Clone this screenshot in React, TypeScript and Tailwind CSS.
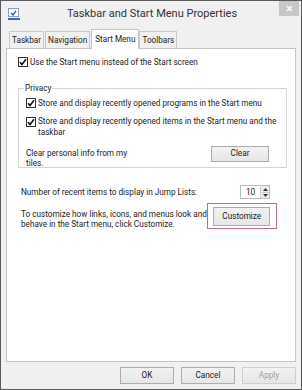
import React from "react";

function Check({ checked = true }: { checked?: boolean }) {
  return (
    <span className="inline-flex h-[10px] w-[10px] shrink-0 items-center justify-center border border-[#333] bg-white">
      {checked && (
        <svg width="8" height="8" viewBox="0 0 8 8">
          <path d="M1 4.2 L3 6.4 L7 1.2" fill="none" stroke="#111" strokeWidth="1.6" />
        </svg>
      )}
    </span>
  );
}

function Btn({ label, disabled = false, className = "" }: { label: string; disabled?: boolean; className?: string }) {
  return (
    <div
      className={
        "flex items-center justify-center border bg-gradient-to-b from-[#f2f2f2] to-[#e6e6e6] " +
        (disabled ? "border-[#cfcfcf] text-[#a0a0a0]" : "border-[#adadad] text-[#222]") +
        " " +
        className
      }
    >
      {label}
    </div>
  );
}

export default function App() {
  const tabs = ["Taskbar", "Navigation", "Start Menu", "Toolbars"];

  return (
    <div
      className="flex h-[390px] w-[302px] flex-col whitespace-nowrap border border-[#5a5a5a] bg-[#f0f0f0] text-[8.2px] text-[#222]"
      style={{ fontFamily: 'Roboto, "Noto Sans", Arial, sans-serif' }}
    >
      {/* title bar */}
      <div className="flex h-[27px] shrink-0 items-start">
        <div className="ml-[7px] mt-[7px] flex h-[12px] w-[13px] flex-col">
          <div className="flex h-[9px] w-[11px] items-center justify-center border border-[#8aa0b8] bg-white">
            <svg width="7" height="6" viewBox="0 0 7 6">
              <path d="M1 3 L3 5 L6 1" fill="none" stroke="#2a5fa8" strokeWidth="1.3" />
            </svg>
          </div>
          <div className="mt-[1px] h-[2px] w-[12px] bg-[#3a6ab0]" />
        </div>
        <div className="flex-1 pt-[5px] pl-[4px] text-center text-[11px] text-[#333]">
          Taskbar and Start Menu Properties
        </div>
        <div className="mr-[2px] flex h-[15px] w-[20px] items-center justify-center bg-[#c7c7c7]">
          <svg width="7" height="7" viewBox="0 0 7 7">
            <path d="M1 1 L6 6 M6 1 L1 6" stroke="#fff" strokeWidth="1.4" />
          </svg>
        </div>
      </div>

      {/* tabs */}
      <div className="relative z-10 flex h-[20px] shrink-0 items-end pl-[8px]">
        {tabs.map((t) => {
          const sel = t === "Start Menu";
          return (
            <div
              key={t}
              className={
                sel
                  ? "-mb-[1px] flex h-[20px] items-start border border-b-0 border-[#c4c4c4] bg-white px-[3px] pt-[3px]"
                  : "mr-[1px] flex h-[17px] items-start border border-b-0 border-[#c9c9c9] bg-[#f0f0f0] px-[2px] pt-[2px]"
              }
            >
              {t}
            </div>
          );
        })}
      </div>

      {/* panel */}
      <div className="mx-[5px] flex flex-1 flex-col border border-[#c4c4c4] bg-white">
        <div className="mt-[7px] ml-[11px] flex items-center gap-[2px]">
          <Check />
          <span>Use the Start menu instead of the Start screen</span>
        </div>

        <div className="relative ml-[11px] mr-[8px] mt-[20px] h-[80px] border border-[#d6d6d6] px-[7px]">
          <span className="absolute -top-[7px] left-[5px] bg-white px-[1px]">Privacy</span>
          <div className="mt-[8px] flex items-center gap-[2px]">
            <Check />
            <span>Store and display recently opened programs in the Start menu</span>
          </div>
          <div className="mt-[6px] flex items-start gap-[2px]">
            <span className="mt-[1px]">
              <Check />
            </span>
            <span className="leading-[11px]">
              Store and display recently opened items in the Start menu and the
              <br />
              taskbar
            </span>
          </div>
          <div className="mt-[10px] flex items-start justify-between">
            <span className="leading-[10px]">
              Clear personal info from my
              <br />
              tiles.
            </span>
            <Btn label="Clear" className="mr-[10px] mt-[-2px] h-[16px] w-[58px]" />
          </div>
        </div>

        <div className="mx-[14px] mt-[17px] flex items-center justify-between">
          <span>Number of recent items to display in Jump Lists:</span>
          <div className="mr-[11px] flex h-[14px] w-[30px] border border-[#bdbdbd]">
            <span className="flex flex-1 items-center justify-center">10</span>
            <div className="flex w-[9px] flex-col border-l border-[#d0d0d0] bg-[#eee]">
              <div className="flex flex-1 items-center justify-center border-b border-[#d0d0d0]">
                <svg width="5" height="3" viewBox="0 0 5 3">
                  <path d="M0 3 L2.5 0 L5 3 Z" fill="#333" />
                </svg>
              </div>
              <div className="flex flex-1 items-center justify-center">
                <svg width="5" height="3" viewBox="0 0 5 3">
                  <path d="M0 0 L2.5 3 L5 0 Z" fill="#333" />
                </svg>
              </div>
            </div>
          </div>
        </div>

        <div className="mx-[14px] mt-[7px] flex items-start justify-between">
          <span className="mt-[3px] leading-[10px]">
            To customize how links, icons, and menus look and
            <br />
            behave in the Start menu, click Customize.
          </span>
          <div className="mr-[6px] -mt-[3px] flex h-[26px] w-[70px] shrink-0 items-center justify-center border border-[#c0707a]">
            <Btn label="Customize" className="h-[19px] w-[57px]" />
          </div>
        </div>
      </div>

      {/* bottom buttons */}
      <div className="flex h-[27px] shrink-0 items-center justify-end gap-[7px] pr-[5px]">
        <Btn label="OK" className="h-[17px] w-[54px]" />
        <Btn label="Cancel" className="h-[17px] w-[54px]" />
        <Btn label="Apply" disabled className="h-[17px] w-[54px]" />
      </div>
    </div>
  );
}
